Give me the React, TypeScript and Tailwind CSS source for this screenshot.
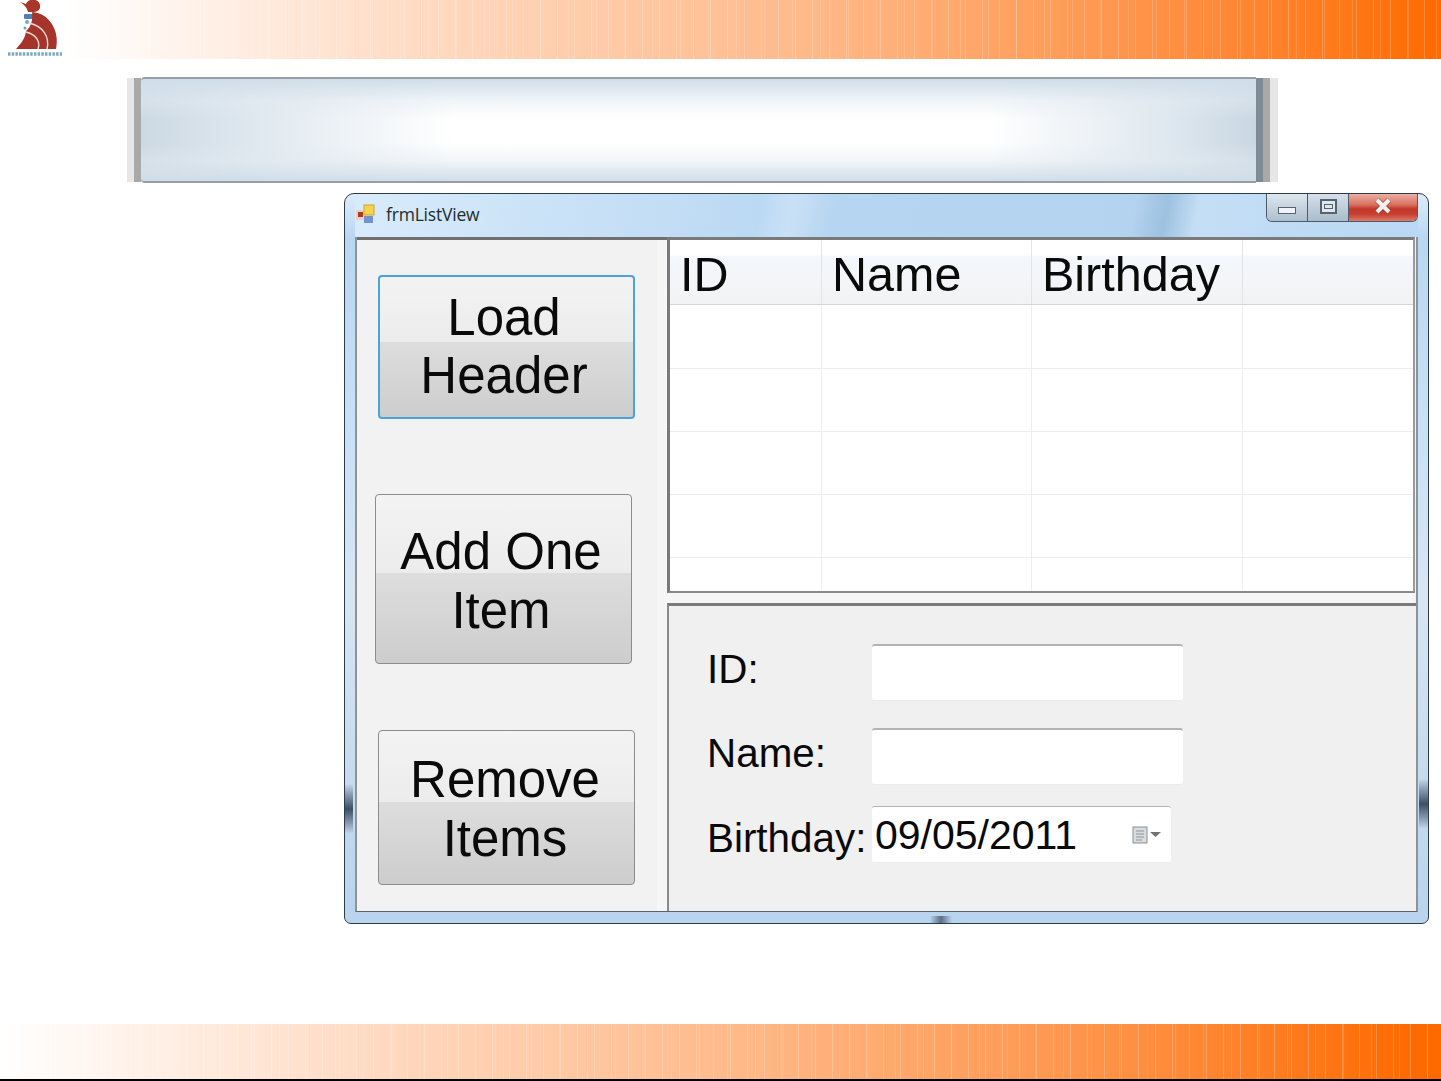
const columns = [
  { label: "ID", width: "w-[152px]" },
  { label: "Name", width: "w-[210px]" },
  { label: "Birthday", width: "w-[211px]" },
  { label: "", width: "flex-1" },
];

const rowHeights = ["h-[64px]", "h-[63px]", "h-[63px]", "h-[63px]", "flex-1"];

function Logo() {
  return (
    <svg width="65" height="59" viewBox="0 0 65 59" className="shrink-0 blur-[0.6px]">
      <path d="M20 2 L26 4 C28 -2 39 -2 40 5 C41 10 37 12 33 12 L28 12 C27 8 25 5 20 2Z" fill="#a8362a" />
      <rect x="24" y="14" width="9" height="5" rx="1" fill="#4d7fb8" />
      <circle cx="27" cy="22" r="2" fill="#7fa4cc" />
      <circle cx="25" cy="28" r="1.5" fill="#6fae8a" />
      <path d="M32 12 C50 13 60 32 56 49 L16 49 C20 44 25 40 26 31 C31 27 33 20 32 12Z" fill="#a5352a" />
      <path d="M29 23 C43 26 50 37 47 49" fill="none" stroke="#f1dcd5" strokeWidth="1.4" />
      <path d="M26 32 C35 34 41 41 38 49" fill="none" stroke="#f1dcd5" strokeWidth="1.4" />
      <path d="M8 54 H62" stroke="#4f8fa8" strokeWidth="3.5" strokeDasharray="2.5 1.2" opacity="0.75" />
    </svg>
  );
}

function FormIcon() {
  return (
    <svg width="20" height="20" viewBox="0 0 20 20" className="shrink-0">
      <rect x="0" y="6" width="9" height="10" fill="#ecd0c8" />
      <rect x="2" y="8" width="5" height="5" fill="#a83a20" />
      <rect x="8" y="1" width="10" height="10" fill="#f4d44c" stroke="#cfa62c" />
      <rect x="8" y="12" width="9" height="7" fill="#6f95cc" />
    </svg>
  );
}

function WindowButtons() {
  return (
    <div className="flex h-[28px] w-[152px] shrink-0 overflow-hidden rounded-b-[6px] border border-t-0 border-[#4c5b67]">
      <div className="flex w-[41px] items-center justify-center border-r border-[#4c5b67] bg-gradient-to-b from-[#dde7ef] to-[#aebfcd]">
        <div className="mt-[6px] h-[7px] w-[18px] border border-[#55636f] bg-[#f0f4f8]" />
      </div>
      <div className="flex w-[41px] items-center justify-center border-r border-[#4c5b67] bg-gradient-to-b from-[#d5e0ea] to-[#a9bccb]">
        <div className="mb-[2px] flex h-[15px] w-[17px] items-center justify-center border-2 border-[#55636f] bg-[#dfe7ee]">
          <div className="h-[5px] w-[9px] border border-[#55636f]" />
        </div>
      </div>
      <div className="flex flex-1 items-center justify-center bg-[linear-gradient(180deg,#eab0a3_0%,#d9705f_40%,#c2382a_55%,#c63f30_75%,#dd7a68_100%)]">
        <svg width="20" height="18" viewBox="0 0 20 18" className="mb-[3px]">
          <path d="M4 3 L16 15 M16 3 L4 15" stroke="#5a2a24" strokeWidth="6" opacity="0.4" />
          <path d="M4 3 L16 15 M16 3 L4 15" stroke="#f6f0ee" strokeWidth="4.2" />
        </svg>
      </div>
    </div>
  );
}

function BigButton({ lines, className }: { lines: string[]; className: string }) {
  return (
    <button
      className={`flex w-[257px] flex-col items-center justify-center rounded-[4px] text-[51px] text-[#0a0a0a] bg-[linear-gradient(180deg,#f3f3f3_0%,#ececec_46.5%,#dddddd_46.5%,#cdcdcd_100%)] ${className}`}
    >
      {lines.map((line) => (
        <span key={line}>{line}</span>
      ))}
    </button>
  );
}

function ListView() {
  return (
    <div className="flex h-[356px] flex-col border-t-[3px] border-r-2 border-b-2 border-l-[3px] border-t-[#7a7a7a] border-r-[#9a9a9a] border-b-[#8a8a8a] border-l-[#7a7a7a] bg-white">
      <div className="flex h-[65px] shrink-0 border-b border-[#d5d5d5] bg-[linear-gradient(180deg,#ffffff_0%,#ffffff_24%,#f4f7fb_25%,#f2f3f5_100%)]">
        {columns.map((col, i) => (
          <div
            key={i}
            className={`flex items-center pl-[10px] pt-[5px] text-[48.5px] leading-none text-[#0a0a0a] ${col.width} ${
              i < 3 ? "border-r border-[#e2e4e8]" : ""
            }`}
          >
            {col.label}
          </div>
        ))}
      </div>
      {rowHeights.map((height, r) => (
        <div key={r} className={`flex ${height} ${r < 4 ? "border-b border-[#ededed]" : ""}`}>
          {columns.map((col, i) => (
            <div key={i} className={`${col.width} ${i < 3 ? "border-r border-[#eeeeee]" : ""}`} />
          ))}
        </div>
      ))}
    </div>
  );
}

function Field({ label, labelClass, children }: { label: string; labelClass: string; children: React.ReactNode }) {
  return (
    <div className="flex items-center">
      <div className={`w-[165px] shrink-0 text-[40.4px] leading-none text-[#0a0a0a] ${labelClass}`}>{label}</div>
      {children}
    </div>
  );
}

function TextBox() {
  return <div className="h-[57px] w-[311px] rounded-[3px] border-t-2 border-b border-t-[#b4b4b4] border-b-[#ececec] bg-white" />;
}

function DateBox() {
  return (
    <div className="flex h-[57px] w-[299px] items-center rounded-[3px] border-t border-b border-t-[#b4b4b4] border-b-[#ececec] bg-white pl-[3px] pr-[9px]">
      <span className="pt-[2px] text-[41px] leading-none text-[#0a0a0a]">09/05/2011</span>
      <svg width="30" height="18" viewBox="0 0 30 18" className="ml-auto">
        <rect x="1" y="1" width="14" height="16" fill="#d9dcdf" stroke="#8a8f94" />
        <path d="M4 5 H12 M4 8 H12 M4 11 H12 M4 14 H10" stroke="#8f959a" />
        <path d="M18 6 H29 L23.5 11Z" fill="#6f7478" />
      </svg>
    </div>
  );
}

export default function App() {
  return (
    <div className="flex h-[1081px] w-[1441px] flex-col overflow-hidden bg-white font-['Liberation_Sans',Arial,sans-serif]">
      {/* top bar */}
      <div className="flex h-[59px] shrink-0">
        <Logo />
        <div className="flex-1 bg-[repeating-linear-gradient(90deg,transparent_0,transparent_16px,rgba(255,255,255,0.22)_16px,rgba(255,255,255,0.22)_17px),repeating-linear-gradient(90deg,transparent_0,transparent_27px,rgba(255,255,255,0.15)_27px,rgba(255,255,255,0.15)_28px),linear-gradient(90deg,#ffffff_0%,#ffd7bd_28%,#ffb887_55%,#ff8d3e_82%,#ff6a00_100%)]" />
      </div>

      {/* empty title banner */}
      <div className="ml-[127px] mt-[18px] flex h-[106px] w-[1151px] shrink-0">
        <div className="my-[1px] w-[7px] bg-[#e6e6e6]" />
        <div className="my-[1px] w-[7px] bg-[#a9a9a9]" />
        <div className="flex-1 rounded-l-[4px] border-y-2 border-[#969fa7] bg-[linear-gradient(180deg,#d0dee9_0%,rgba(226,234,241,0.45)_22%,rgba(255,255,255,0)_40%,rgba(255,255,255,0)_62%,rgba(226,234,241,0.45)_80%,#d0dee9_100%),linear-gradient(90deg,#ccd9e3_0%,#dfe8ef_10%,#ffffff_28%,#ffffff_76%,#dfe8ef_92%,#c9d7e2_100%)]" />
        <div className="my-[1px] w-[7px] bg-[#7f8c97]" />
        <div className="my-[1px] w-[7px] bg-[#a9a9a9]" />
        <div className="my-[1px] w-[8px] bg-[#e6e6e6]" />
      </div>

      {/* frmListView window */}
      <div className="relative ml-[344px] mt-[10px] flex h-[731px] w-[1085px] shrink-0 flex-col rounded-t-[10px] rounded-b-[7px] border border-[#2c3b47] bg-[linear-gradient(180deg,#dcedfb_0%,#b9d7f1_6%,#c7e0f6_30%,#d7e6f2_55%,#c3d9ec_85%,#b8d4ee_100%)] px-[10px] pb-[11px]">
        <div className="absolute left-0 top-[590px] h-[50px] w-[8px] rounded-[3px] bg-gradient-to-b from-[#c3d9ec] via-[#3f5064] to-[#c3d9ec]" />
        <div className="absolute right-0 top-[585px] h-[50px] w-[9px] rounded-[3px] bg-gradient-to-b from-[#c3d9ec] via-[#3f5064] to-[#c3d9ec]" />
        <div className="absolute bottom-0 left-[585px] h-[7px] w-[22px] bg-gradient-to-r from-[#b8d4ee] via-[#5d7087] to-[#b8d4ee]" />

        <div className="flex h-[43px] shrink-0 items-start bg-[linear-gradient(100deg,#d8ebfb_0%,#bcd9f3_38%,#c9e1f6_41%,#b6d5f0_45%,#b4d3ef_73%,#9dc1df_76%,#c4def5_79%,#b9d8f3_100%)]">
          <div className="flex h-full flex-1 items-center gap-[10px] pl-[1px] pb-[3px] font-['Open_Sans',sans-serif] text-[17.5px] tracking-[-0.2px] text-[#1f2c2c]">
            <FormIcon />
            <span>frmListView</span>
          </div>
          <WindowButtons />
        </div>

        <div className="flex min-h-0 flex-1 border-r-2 border-b border-l-2 border-r-[#8b9499] border-b-[#55646f] border-l-[#8b9499] bg-[#f1f1f1]">
          <div className="flex w-[300px] shrink-0 flex-col border-t-[3px] border-[#6f6f6f] bg-[#f2f2f2]">
            <BigButton lines={["Load", "Header"]} className="ml-[21px] mt-[35px] h-[144px] border-2 border-[#4ba3d6] pr-[5px] leading-[58px]" />
            <BigButton lines={["Add One", "Item"]} className="ml-[18px] mt-[75px] h-[170px] border border-[#8c8c8c] pr-[5px] pt-[4px] leading-[59px]" />
            <BigButton lines={["Remove", "Items"]} className="ml-[21px] mt-[66px] h-[155px] border border-[#8c8c8c] pr-[3px] pt-[2px] leading-[59px]" />
          </div>
          <div className="w-[10px] shrink-0 border-t-[3px] border-[#6f6f6f] bg-[#f6f6f6]" />
          <div className="flex min-w-0 flex-1 flex-col pr-[1px]">
            <ListView />
            <div className="h-[10px] shrink-0 bg-[#f6f6f6]" />
            <div className="-mr-[1px] flex flex-1 flex-col border-t-[3px] border-l-2 border-t-[#7a7a7a] border-l-[#8a8a8a] bg-[#f0f0f0] pl-[38px] pt-[38px]">
              <Field label="ID:" labelClass="pb-[6px]">
                <TextBox />
              </Field>
              <div className="mt-[27px]">
                <Field label="Name:" labelClass="pb-[6px]">
                  <TextBox />
                </Field>
              </div>
              <div className="mt-[21px]">
                <Field label="Birthday:" labelClass="pt-[8px]">
                  <DateBox />
                </Field>
              </div>
            </div>
          </div>
        </div>
      </div>

      {/* footer bar */}
      <div className="mt-auto h-[55px] shrink-0 bg-[repeating-linear-gradient(90deg,transparent_0,transparent_16px,rgba(255,255,255,0.22)_16px,rgba(255,255,255,0.22)_17px),repeating-linear-gradient(90deg,transparent_0,transparent_27px,rgba(255,255,255,0.15)_27px,rgba(255,255,255,0.15)_28px),linear-gradient(90deg,#ffffff_0%,#ffd7bd_28%,#ffb887_52%,#ff8d3e_80%,#ff6a00_98%)]" />
      <div className="h-[2px] shrink-0 bg-black" />
    </div>
  );
}
